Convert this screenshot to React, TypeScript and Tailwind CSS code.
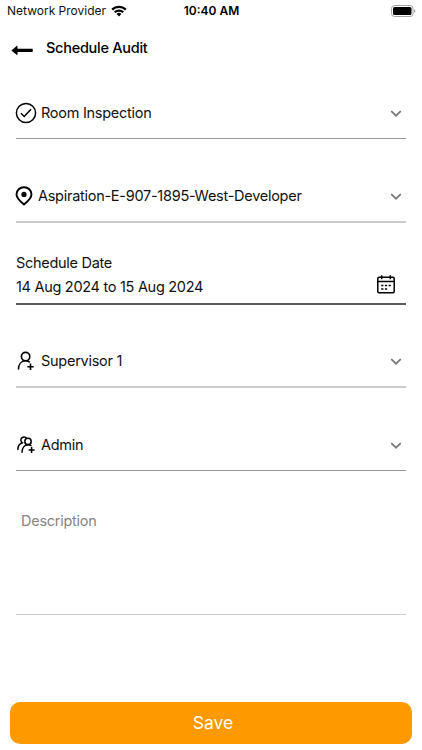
import React from "react";

type IconProps = { className?: string };

const ArrowLeft = ({ className }: IconProps) => (
  <svg viewBox="0 0 22 11" className={className} fill="#000">
    <path d="M6.2 0.6L0.4 5.4l5.8 4.8c.3-.8.4-2 .4-3.1H21a1 1 0 0 0 .8-1V4.7a1 1 0 0 0-.8-1H6.6c0-1.1-.1-2.3-.4-3.1z" />
  </svg>
);

const Wifi = ({ className }: IconProps) => (
  <svg viewBox="0 0 16 12" className={className} fill="none" stroke="#000" strokeWidth="2.2">
    <path d="M1.2 4.6a9.7 9.7 0 0 1 13.6 0" />
    <path d="M3.7 7.3a6.1 6.1 0 0 1 8.6 0" />
    <path d="M8 11.4 5.6 9a3.4 3.4 0 0 1 4.8 0z" fill="#000" stroke="none" />
  </svg>
);

const Battery = ({ className }: IconProps) => (
  <svg viewBox="0 0 25 12" className={className}>
    <rect x="0.5" y="0.5" width="21.5" height="11" rx="3" fill="none" stroke="#a3a3a3" />
    <rect x="2" y="2" width="18.5" height="8" rx="1.6" fill="#000" />
    <path d="M23.2 4.2a2 2 0 0 1 0 3.6z" fill="#8a8a8a" />
  </svg>
);

const CheckCircle = ({ className }: IconProps) => (
  <svg viewBox="0 0 22 22" className={className} fill="none" stroke="#000">
    <circle cx="11" cy="11" r="9.6" strokeWidth="1.5" />
    <path d="M6 11.3l3.2 3.2 6.8-7.3" strokeWidth="1.5" />
  </svg>
);

const Pin = ({ className }: IconProps) => (
  <svg viewBox="0 0 18 20" className={className}>
    <path
      d="M9 18.4C5.6 15.6 1.5 12.2 1.5 8.4a7.5 7.2 0 0 1 15 0c0 3.8-4.1 7.2-7.5 10z"
      fill="none"
      stroke="#000"
      strokeWidth="1.9"
      strokeLinejoin="round"
    />
    <circle cx="9" cy="8.4" r="2.6" fill="#000" />
  </svg>
);

const UserPlus = ({ className }: IconProps) => (
  <svg viewBox="0 0 18 20" className={className} fill="none" stroke="#000" strokeWidth="1.6">
    <circle cx="8.6" cy="5.6" r="4.2" />
    <path d="M1.5 18c.1-4.7 2.7-8.2 7.1-8.2 1.5 0 2.7.4 3.7 1.1" strokeLinecap="round" />
    <path d="M13.5 12.5v6.4M10.3 15.7h6.4" />
  </svg>
);

const UsersPlus = ({ className }: IconProps) => (
  <svg viewBox="0 0 18 20" className={className} fill="none" stroke="#000" strokeWidth="1.5">
    <path d="M5 7.6a3.2 3.2 0 1 1 4.6-4.4" />
    <path d="M0.9 14.6c0-3.5 1.6-6.2 4.8-6.9" strokeLinecap="round" />
    <circle cx="11" cy="6.4" r="3.2" />
    <path d="M5 17.3c.1-4.3 2.4-7.5 6.2-7.5 1.1 0 2 .3 2.8.8" strokeLinecap="round" />
    <path d="M14.6 11.9v6M11.6 14.9h6" />
  </svg>
);

const Calendar = ({ className }: IconProps) => (
  <svg viewBox="0 0 18 19" className={className} fill="none" stroke="#000" strokeWidth="1.5">
    <rect x="0.8" y="2.2" width="16.4" height="15.6" rx="1.2" />
    <path d="M0.8 6.6h16.4M4.7 0.3v4M13.3 0.3v4" />
    <path d="M4.2 10.5h2.2M7.9 10.5h2.2M11.6 10.5h2.2M4.2 14h2.2M7.9 14h2.2" />
  </svg>
);

const ChevronDown = () => (
  <svg viewBox="0 0 12 8" className="mt-px mr-1 h-2 w-3" fill="none" stroke="#7c7c7c" strokeWidth="1.9">
    <path d="M1.8 1.6L6 5.7l4.2-4.1" strokeLinecap="round" />
  </svg>
);

type SelectRowProps = {
  icon: React.ReactNode;
  label: string;
  className?: string;
};

const SelectRow = ({ icon, label, className = "" }: SelectRowProps) => (
  <button className={`flex w-full items-center text-left tracking-[-0.27px] ${className}`}>
    {icon}
    <span className="flex-1">{label}</span>
    <ChevronDown />
  </button>
);

const App = () => {
  return (
    <div className="flex h-[750px] w-full flex-col bg-white font-['Inter',sans-serif] text-[14.5px] text-[#111]">
      <div className="grid h-[22px] grid-cols-3 items-center pl-[7px] pr-[6px] text-[12px] leading-none">
        <div className="flex items-center gap-[5px] whitespace-nowrap">
          <span>Network Provider</span>
          <Wifi className="h-3 w-4" />
        </div>
        <span className="text-center font-semibold text-black">10:40 AM</span>
        <Battery className="h-3 w-[25px] justify-self-end" />
      </div>

      <header className="flex h-[52px] items-center pl-[11px]">
        <ArrowLeft className="mt-1 h-[11px] w-[22px]" />
        <h1 className="ml-[13px] font-medium tracking-[-0.27px] text-black">Schedule Audit</h1>
      </header>

      <main className="flex flex-1 flex-col px-4 pt-[14px]">
        <SelectRow
          className="h-[51px] border-b border-[#999]"
          icon={<CheckCircle className="-ml-px mr-1 h-[22px] w-[22px]" />}
          label="Room Inspection"
        />
        <SelectRow
          className="mt-8 h-[52px] border-b-2 border-[#ccc]"
          icon={<Pin className="-ml-px mr-[5px] h-5 w-[18px]" />}
          label="Aspiration-E-907-1895-West-Developer"
        />

        <div className="mt-8 flex h-[50px] items-end justify-between border-b-2 border-[#5c5c5c]">
          <div className="pb-1 leading-6 tracking-[-0.29px]">
            <p>Schedule Date</p>
            <p>14 Aug 2024 to 15 Aug 2024</p>
          </div>
          <Calendar className="mb-[9px] mr-[11px] h-[19px] w-[18px]" />
        </div>

        <SelectRow
          className="mt-[31px] h-[52px] border-b-2 border-[#ccc]"
          icon={<UserPlus className="ml-px mr-[6px] h-5 w-[18px]" />}
          label="Supervisor 1"
        />
        <SelectRow
          className="mt-8 h-[51px] border-b border-[#999]"
          icon={<UsersPlus className="ml-px mr-[6px] h-5 w-[18px]" />}
          label="Admin"
        />

        <textarea
          className="mt-[39px] h-[105px] resize-none border-b border-[#ccc] px-[5px] leading-[22px] tracking-[-0.27px] outline-none placeholder:text-[#858585]"
          placeholder="Description"
        />
      </main>

      <footer className="px-[10px] pb-[6px]">
        <button className="h-[42px] w-full rounded-[10px] bg-[#ff9900] pl-1 text-[17.5px] text-white">Save</button>
      </footer>
    </div>
  );
};

export default App;
